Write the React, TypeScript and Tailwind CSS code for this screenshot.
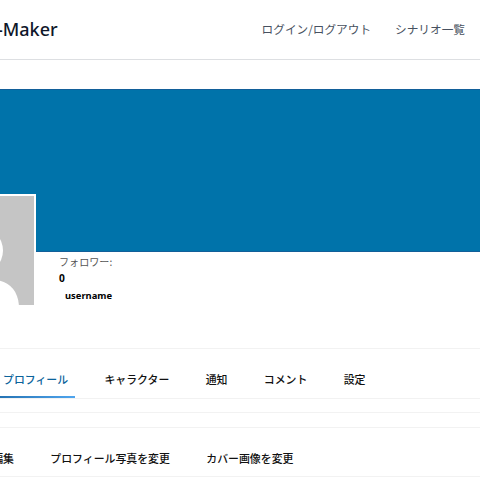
import clsx from "clsx";

const navLinks = ["ログイン/ログアウト", "シナリオ一覧"];

const tabs = [
  { label: "プロフィール", active: true },
  { label: "キャラクター" },
  { label: "通知" },
  { label: "コメント" },
  { label: "設定" },
];

const subTabs = ["プロフィール編集", "プロフィール写真を変更", "カバー画像を変更"];

function Avatar() {
  return (
    <div className="absolute -left-[77px] top-[105px] w-[113px] border-2 border-white bg-white">
      <svg viewBox="0 0 109 109" className="block h-[109px] w-full bg-[#c5c5c5]">
        <circle cx="54.5" cy="54.5" r="23.5" fill="#fff" />
        <path d="M15 112C15 94 26 84 40 84H69C83 84 94 94 94 112Z" fill="#fff" />
      </svg>
    </div>
  );
}

export default function App() {
  return (
    <div className="h-[480px] w-[480px] overflow-hidden bg-white font-['Noto_Sans','Noto_Sans_CJK_JP',sans-serif]">
      {/* Header */}
      <header className="flex h-[60px] items-center justify-between border-b border-[#dddfe2] pr-[15px]">
        <div className="-ml-[3px] whitespace-nowrap text-[18px] font-medium text-[#0f172a]">-Maker</div>
        <nav className="flex gap-[24px] pb-[2px] font-['Noto_Sans_CJK_JP',sans-serif] text-[11.67px] text-[#475160]">
          {navLinks.map((link) => (
            <a key={link}>{link}</a>
          ))}
        </nav>
      </header>

      <main className="pt-[29px]">
        {/* Cover and profile summary */}
        <section className="relative h-[259px]">
          <div className="h-[163px] border-y border-[#125f99] bg-[#0073aa]" />
          <Avatar />
          <div className="pl-[59px] text-[9.4px] leading-[17px] text-black">
            <p className="pt-px font-['Noto_Sans_CJK_JP',sans-serif] text-[10.1px] text-[#555]">フォロワー:</p>
            <p className="text-[10.2px] font-bold">0</p>
            <p className="pl-[6px] font-bold">username</p>
          </div>
        </section>

        {/* Main tabs */}
        <ul className="flex h-[51px] gap-[22.3px] border-y border-[#f2f2f2] font-['Noto_Sans_CJK_JP',sans-serif] text-[10.9px] font-medium text-[#111]">
          {tabs.map((tab) => (
            <li
              key={tab.label}
              className={clsx("flex h-[49px] shrink-0 flex-col px-[7px]", tab.active && "-ml-[4px] text-[#0b639b]")}
            >
              <span className="flex h-[47px] items-center pt-[14px]">{tab.label}</span>
              {tab.active && (
                <span className="-mx-[7px] h-[2px] bg-linear-to-r from-[#2271b1] to-[#4fa5ee]" />
              )}
            </li>
          ))}
        </ul>

        {/* Sub tabs */}
        <div className="mt-[13px] border-t border-[#f2f2f2] pt-[14px]">
          <ul className="-ml-[73px] flex h-[50px] gap-[36.4px] border-y border-[#f2f2f2] pt-[12px] font-['Noto_Sans_CJK_JP',sans-serif] text-[10.9px] font-medium text-[#111]">
            {subTabs.map((label) => (
              <li key={label} className="flex shrink-0 items-center">
                {label}
              </li>
            ))}
          </ul>
        </div>
      </main>
    </div>
  );
}
